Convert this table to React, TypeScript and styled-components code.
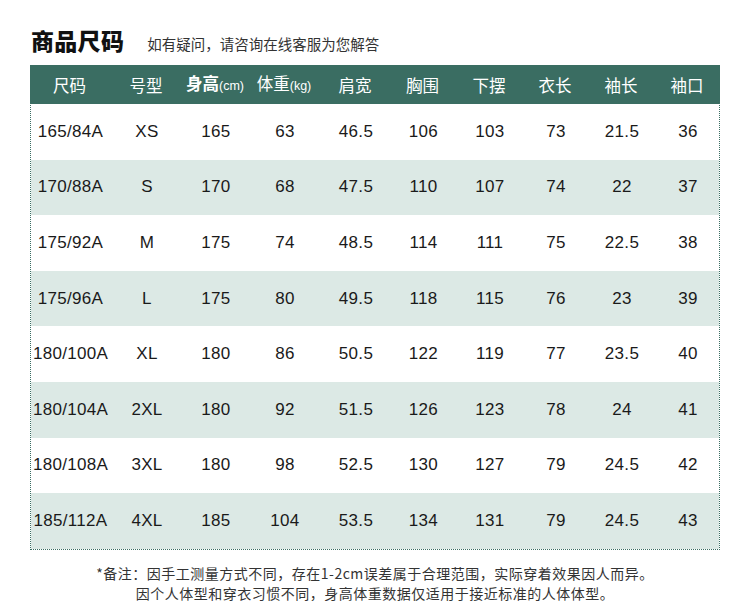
import React from "react";
import styled, { createGlobalStyle } from "styled-components";

const Global = createGlobalStyle`
  html, body { margin: 0; padding: 0; background: #ffffff; }
  body { font-family: "Liberation Sans", Arial, "Noto Sans CJK SC", sans-serif; }
`;

const GREEN = "#3a6d62";
const LIGHT = "#dce9e5";
const COLS = "79px 74px 64px 74px 68px 67px 66px 66px 66px 66px";

const Page = styled.div`
  width: 750px;
  height: 601px;
  padding: 27px 30px 0 30px;
  box-sizing: border-box;
  overflow: hidden;
`;

const TitleRow = styled.div`
  display: flex;
  align-items: baseline;
  gap: 23px;
  height: 26px;
  margin-bottom: 12px;
  padding-left: 1px;
`;

const Title = styled.h1`
  margin: 0;
  font-family: "Noto Sans CJK SC", sans-serif;
  font-size: 23px;
  font-weight: 900;
  line-height: 26px;
  color: #111;
  letter-spacing: 0.3px;
`;

const Subtitle = styled.span`
  font-family: "Noto Sans CJK SC", sans-serif;
  font-size: 14.5px;
  line-height: 26px;
  color: #333;
`;

const Table = styled.div`
  width: 690px;
  border: 1px dotted ${GREEN};
  border-top: none;
  box-sizing: border-box;
`;

const Row = styled.div<{ $variant: "head" | "white" | "light" }>`
  display: grid;
  grid-template-columns: ${COLS};
  align-items: center;
  height: ${(p) => (p.$variant === "head" ? "39px" : "55.6px")};
  margin: ${(p) => (p.$variant === "head" ? "0 -1px" : "0")};
  background: ${(p) =>
    p.$variant === "head" ? GREEN : p.$variant === "light" ? LIGHT : "#ffffff"};
  color: ${(p) => (p.$variant === "head" ? "#ffffff" : "#1a1a1a")};
`;

const HeadCell = styled.div`
  text-align: center;
  font-family: "Noto Sans CJK SC", sans-serif;
  font-size: 16.5px;
  line-height: 20px;
  white-space: nowrap;
`;

const Strong = styled.span<{ $weight: number }>`
  font-weight: ${(p) => p.$weight};
`;

const Unit = styled.span`
  font-family: "Liberation Sans", Arial, sans-serif;
  font-size: 12.5px;
`;

const Cell = styled.div`
  text-align: center;
  font-family: "Liberation Sans", Arial, sans-serif;
  font-size: 17px;
  letter-spacing: 0.3px;
  line-height: 20px;
  white-space: nowrap;
`;

const Notes = styled.div`
  margin-top: 16px;
  display: flex;
  flex-direction: column;
  gap: 6px;
  align-items: center;
  font-family: "Noto Sans CJK SC", sans-serif;
  font-size: 14px;
  line-height: 14px;
  letter-spacing: 0.5px;
  color: #333;
`;

const NoteLine = styled.div`
  white-space: nowrap;
`;

const rows: string[][] = [
  ["165/84A", "XS", "165", "63", "46.5", "106", "103", "73", "21.5", "36"],
  ["170/88A", "S", "170", "68", "47.5", "110", "107", "74", "22", "37"],
  ["175/92A", "M", "175", "74", "48.5", "114", "111", "75", "22.5", "38"],
  ["175/96A", "L", "175", "80", "49.5", "118", "115", "76", "23", "39"],
  ["180/100A", "XL", "180", "86", "50.5", "122", "119", "77", "23.5", "40"],
  ["180/104A", "2XL", "180", "92", "51.5", "126", "123", "78", "24", "41"],
  ["180/108A", "3XL", "180", "98", "52.5", "130", "127", "79", "24.5", "42"],
  ["185/112A", "4XL", "185", "104", "53.5", "134", "131", "79", "24.5", "43"],
];

export default function App() {
  return (
    <>
      <Global />
      <Page>
        <TitleRow>
          <Title>商品尺码</Title>
          <Subtitle>如有疑问，请咨询在线客服为您解答</Subtitle>
        </TitleRow>
        <Table>
          <Row $variant="head">
            <HeadCell>尺码</HeadCell>
            <HeadCell>号型</HeadCell>
            <HeadCell>
              <Strong $weight={700}>身高</Strong>
              <Unit>(cm)</Unit>
            </HeadCell>
            <HeadCell>
              <Strong $weight={400}>体重</Strong>
              <Unit>(kg)</Unit>
            </HeadCell>
            <HeadCell>肩宽</HeadCell>
            <HeadCell>胸围</HeadCell>
            <HeadCell>下摆</HeadCell>
            <HeadCell>衣长</HeadCell>
            <HeadCell>袖长</HeadCell>
            <HeadCell>袖口</HeadCell>
          </Row>
          {rows.map((r, i) => (
            <Row key={i} $variant={i % 2 === 0 ? "white" : "light"}>
              {r.map((v, j) => (
                <Cell key={j}>{v}</Cell>
              ))}
            </Row>
          ))}
        </Table>
        <Notes>
          <NoteLine>*备注：因手工测量方式不同，存在1-2cm误差属于合理范围，实际穿着效果因人而异。</NoteLine>
          <NoteLine>因个人体型和穿衣习惯不同，身高体重数据仅适用于接近标准的人体体型。</NoteLine>
        </Notes>
      </Page>
    </>
  );
}
